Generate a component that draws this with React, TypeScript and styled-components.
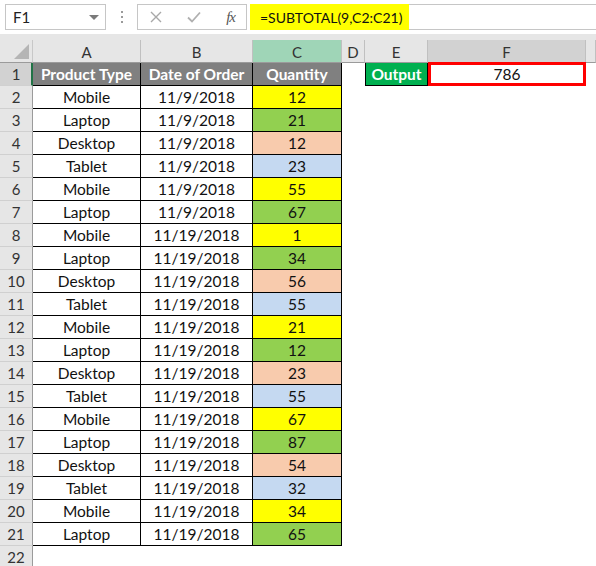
import React from "react";
import styled, { createGlobalStyle } from "styled-components";

const Global = createGlobalStyle`
  html, body { margin: 0; padding: 0; background: #ffffff; }
  body { font-family: Lato, "Open Sans", sans-serif; width: 596px; height: 566px; overflow: hidden; }
`;

const Page = styled.div`
  width: 596px;
  height: 566px;
  overflow: hidden;
  background: #ffffff;
`;

const Toolbar = styled.div`
  height: 34px;
  display: flex;
  align-items: flex-start;
  padding-top: 4px;
  box-sizing: border-box;
  background: #ffffff;
`;

const NameBox = styled.div`
  margin-left: 5px;
  width: 101px;
  height: 26px;
  box-sizing: border-box;
  border: 1px solid #c6c6c6;
  display: flex;
  align-items: center;
  justify-content: space-between;
  padding: 0 6px 0 7px;
  font-size: 15px;
  color: #222;
`;

const Caret = styled.span`
  width: 0;
  height: 0;
  border-left: 5px solid transparent;
  border-right: 5px solid transparent;
  border-top: 5px solid #7a7a7a;
`;

const Dots = styled.div`
  width: 31px;
  height: 26px;
  display: flex;
  flex-direction: column;
  align-items: center;
  justify-content: center;
  gap: 3px;
  & > span {
    width: 2px;
    height: 2px;
    background: #9a9a9a;
  }
`;

const ButtonBox = styled.div`
  width: 110px;
  height: 26px;
  box-sizing: border-box;
  border: 1px solid #c6c6c6;
  display: flex;
  align-items: center;
  justify-content: space-between;
  padding: 0 11px 0 12px;
`;

const Fx = styled.span`
  font-family: "Liberation Serif", serif;
  font-style: italic;
  font-size: 15px;
  color: #555;
  letter-spacing: -1px;
`;

const FormulaBox = styled.div`
  margin-left: 3px;
  flex: 1;
  height: 26px;
  box-sizing: border-box;
  border-top: 1px solid #c6c6c6;
  border-bottom: 1px solid #c6c6c6;
  display: flex;
  align-items: stretch;
`;

const FormulaText = styled.div`
  background: #ffff00;
  display: flex;
  align-items: center;
  padding: 0 7px 0 10px;
  margin: -1px 0;
  font-size: 14px;
  color: #111;
`;

const Band = styled.div`
  height: 6px;
  background: #e6e6e6;
`;

const Grid = styled.div`
  display: grid;
  grid-template-columns: 33px 108px 112px 89px 23px 63px 158px 1fr;
  grid-template-rows: 23px repeat(22, 23px);
  font-size: 15.5px;
`;

const Corner = styled.div`
  background: #e6e6e6;
  border-right: 1px solid #c8c8c8;
  border-bottom: 1px solid #9b9b9b;
  position: relative;
  &::after {
    content: "";
    position: absolute;
    right: 3px;
    bottom: 3px;
    width: 0;
    height: 0;
    border-left: 15px solid transparent;
    border-bottom: 15px solid #b5b5b5;
  }
`;

const ColHead = styled.div<{ $bg?: string }>`
  background: ${(p) => p.$bg || "#e6e6e6"};
  border-right: 1px solid #c0c0c0;
  border-bottom: 1px solid #9b9b9b;
  display: flex;
  align-items: center;
  justify-content: center;
  color: #333;
  box-sizing: border-box;
  padding-top: 1px;
  font-size: 15px;
`;

const RowHead = styled.div<{ $sel?: boolean }>`
  background: ${(p) => (p.$sel ? "#d2d2d2" : "#e6e6e6")};
  border-right: ${(p) => (p.$sel ? "2px solid #217346" : "1px solid #9b9b9b")};
  border-bottom: 1px solid #d0d0d0;
  display: flex;
  align-items: center;
  justify-content: center;
  color: #333;
  box-sizing: border-box;
  padding-left: ${(p) => (p.$sel ? "1px" : "0")};
  font-size: 15px;
`;

const Cell = styled.div<{ $bg?: string; $bold?: boolean; $color?: string; $border?: boolean; $left?: boolean }>`
  background: ${(p) => p.$bg || "#ffffff"};
  border-right: 1px solid ${(p) => (p.$border ? "#000" : "transparent")};
  border-bottom: 1px solid ${(p) => (p.$border ? "#000" : "transparent")};
  border-left: ${(p) => (p.$left ? "1px solid #000" : "none")};
  display: flex;
  align-items: center;
  justify-content: center;
  font-weight: ${(p) => (p.$bold ? 700 : 400)};
  color: ${(p) => p.$color || "#111"};
  box-sizing: border-box;
  white-space: nowrap;
`;

const OutputCell = styled.div`
  border: 3px solid #ff0000;
  margin: -1px 0 0 0;
  display: flex;
  align-items: center;
  justify-content: center;
  color: #111;
  box-sizing: border-box;
`;

const HEAD_BG = "#808080";
const COLORS: Record<string, string> = {
  Mobile: "#ffff00",
  Laptop: "#92d050",
  Desktop: "#f8cbad",
  Tablet: "#c5d9f1",
};

const rows: [string, string, number][] = [
  ["Mobile", "11/9/2018", 12],
  ["Laptop", "11/9/2018", 21],
  ["Desktop", "11/9/2018", 12],
  ["Tablet", "11/9/2018", 23],
  ["Mobile", "11/9/2018", 55],
  ["Laptop", "11/9/2018", 67],
  ["Mobile", "11/19/2018", 1],
  ["Laptop", "11/19/2018", 34],
  ["Desktop", "11/19/2018", 56],
  ["Tablet", "11/19/2018", 55],
  ["Mobile", "11/19/2018", 21],
  ["Laptop", "11/19/2018", 12],
  ["Desktop", "11/19/2018", 23],
  ["Tablet", "11/19/2018", 55],
  ["Mobile", "11/19/2018", 67],
  ["Laptop", "11/19/2018", 87],
  ["Desktop", "11/19/2018", 54],
  ["Tablet", "11/19/2018", 32],
  ["Mobile", "11/19/2018", 34],
  ["Laptop", "11/19/2018", 65],
];

export default function App() {
  return (
    <Page>
      <Global />
      <Toolbar>
        <NameBox>
          <span>F1</span>
          <Caret />
        </NameBox>
        <Dots>
          <span />
          <span />
          <span />
        </Dots>
        <ButtonBox>
          <svg width="12" height="12" viewBox="0 0 12 12">
            <path d="M1 1 L11 11 M11 1 L1 11" stroke="#a8a8a8" strokeWidth="1.4" fill="none" />
          </svg>
          <svg width="14" height="12" viewBox="0 0 14 12">
            <path d="M1 6.5 L5 10.5 L13 1.5" stroke="#b0b0b0" strokeWidth="1.8" fill="none" />
          </svg>
          <Fx>fx</Fx>
        </ButtonBox>
        <FormulaBox>
          <FormulaText>=SUBTOTAL(9,C2:C21)</FormulaText>
        </FormulaBox>
      </Toolbar>
      <Band />
      <Grid>
        <Corner />
        <ColHead>A</ColHead>
        <ColHead>B</ColHead>
        <ColHead $bg="#9fd5b7">C</ColHead>
        <ColHead>D</ColHead>
        <ColHead>E</ColHead>
        <ColHead $bg="#d2d2d2">F</ColHead>
        <ColHead />

        <RowHead $sel>1</RowHead>
        <Cell $bg={HEAD_BG} $bold $color="#fff" $border>Product Type</Cell>
        <Cell $bg={HEAD_BG} $bold $color="#fff" $border>Date of Order</Cell>
        <Cell $bg={HEAD_BG} $bold $color="#fff" $border>Quantity</Cell>
        <Cell />
        <Cell $bg="#00b050" $bold $color="#fff" $border $left>Output</Cell>
        <OutputCell>786</OutputCell>
        <Cell />

        {rows.map(([p, d, q], i) => (
          <React.Fragment key={i}>
            <RowHead>{i + 2}</RowHead>
            <Cell $border>{p}</Cell>
            <Cell $border>{d}</Cell>
            <Cell $border $bg={COLORS[p]}>{q}</Cell>
            <Cell />
            <Cell />
            <Cell />
            <Cell />
          </React.Fragment>
        ))}
        <RowHead>22</RowHead>
      </Grid>
    </Page>
  );
}
